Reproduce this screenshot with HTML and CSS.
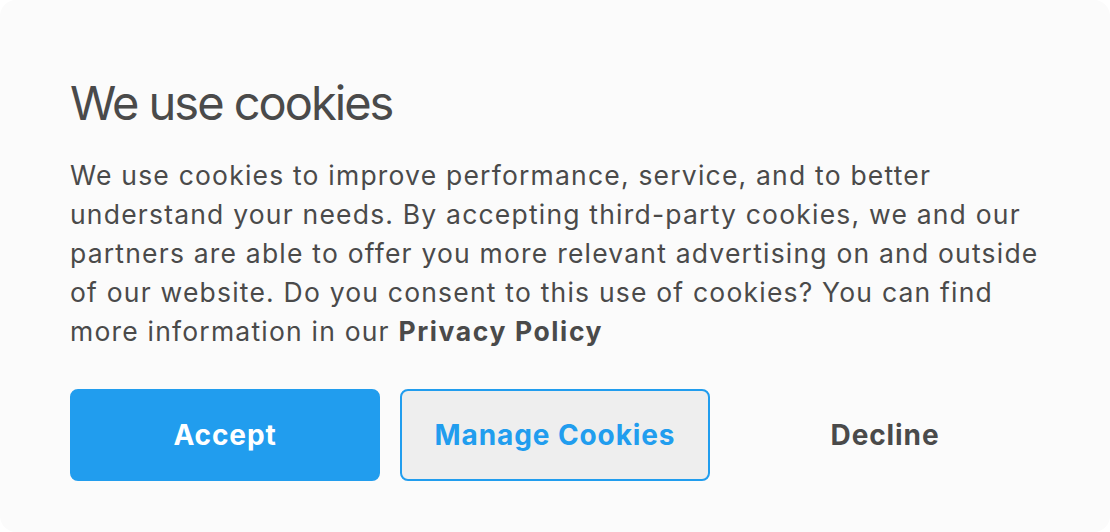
FILE: index.html
```html
<!DOCTYPE html>
<html lang="en">
<head>
<meta charset="utf-8">
<title>Cookies</title>
<link rel="stylesheet" href="styles.css">
</head>
<body>
<div class="card">
  <h1 class="title">We use cookies</h1>
  <p class="text">We use cookies to improve performance, service, and to better understand your needs. By accepting third-party cookies, we and our partners are able to offer you more relevant advertising on and outside of our website. Do you consent to this use of cookies? You can find more information in our <a class="link" href="#">Privacy Policy</a></p>
  <div class="actions">
    <button class="btn btn-primary">Accept</button>
    <button class="btn btn-outline">Manage Cookies</button>
    <button class="btn btn-plain">Decline</button>
  </div>
</div>
</body>
</html>
```
FILE: styles.css
```css
html, body {
  margin: 0;
  padding: 0;
  background: #ffffff;
}
body {
  font-family: Inter, "Noto Sans", sans-serif;
  color: #4a4a4a;
}
.card {
  box-sizing: border-box;
  width: 1110px;
  height: 532px;
  background: #fbfbfb;
  border-radius: 16px;
  padding: 75px 70px 51px;
}
.title {
  margin: 0;
  font-size: 47px;
  font-weight: 400;
  line-height: 56px;
  letter-spacing: -2px;
  color: #4a4a4a;
}
.text {
  margin: 25px 0 0;
  font-size: 26.5px;
  line-height: 39px;
  letter-spacing: 1.2px;
  color: #4a4a4a;
}
.link {
  color: #4a4a4a;
  font-weight: 700;
  letter-spacing: 1.6px;
  text-decoration: none;
}
.actions {
  display: flex;
  gap: 20px;
  margin-top: 38px;
}
.btn {
  box-sizing: border-box;
  width: 310px;
  height: 92px;
  border-radius: 8px;
  font-family: inherit;
  font-size: 28px;
  font-weight: 700;
  letter-spacing: 0.9px;
  border: 2px solid transparent;
  background: transparent;
  cursor: pointer;
}
.btn-primary {
  background: #219dee;
  color: #ffffff;
  border-color: #219dee;
}
.btn-outline {
  background: #eeeeee;
  color: #219dee;
  border-color: #219dee;
}
.btn-plain {
  color: #4a4a4a;
}
```
